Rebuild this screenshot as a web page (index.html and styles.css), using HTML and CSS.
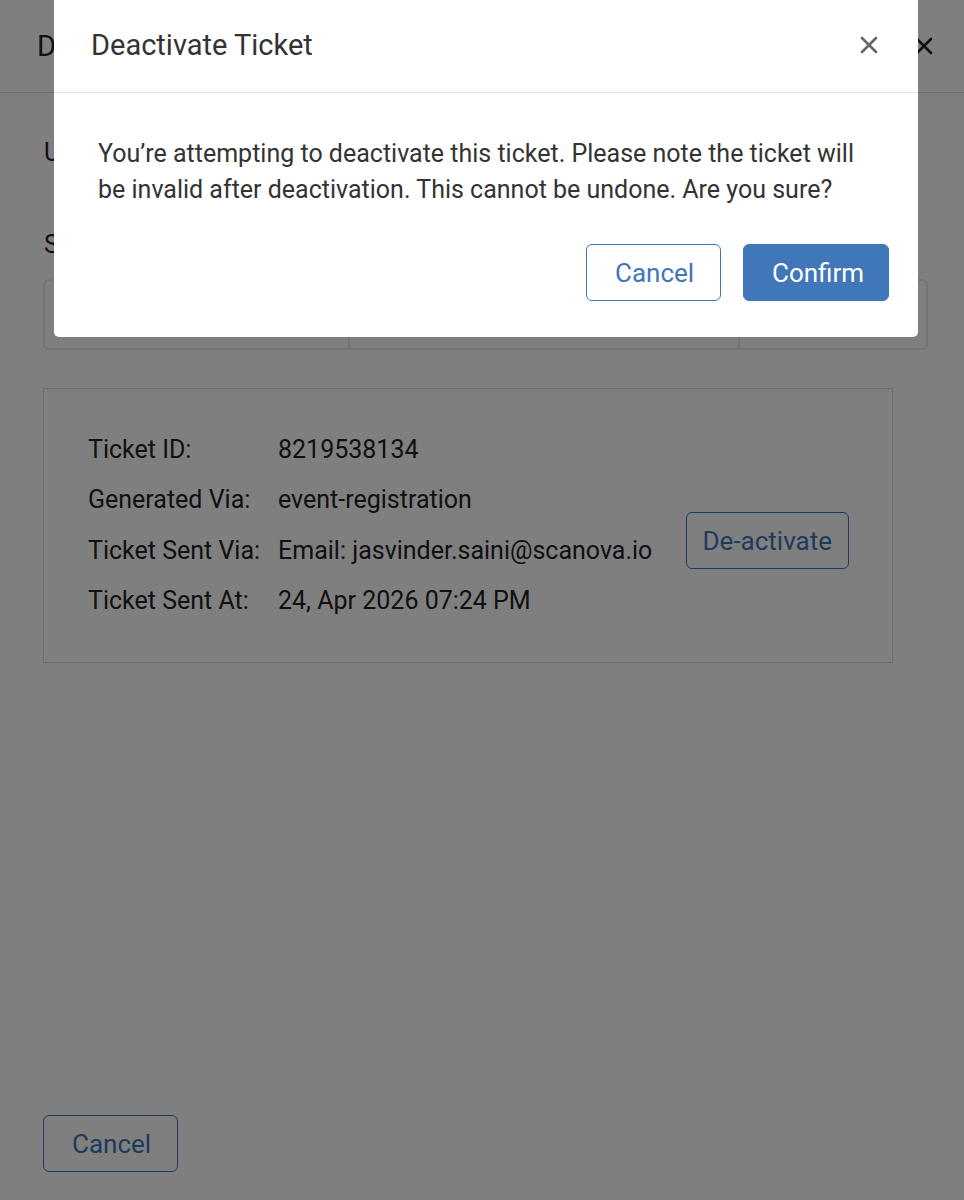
FILE: index.html
```html
<!DOCTYPE html>
<html lang="en">

<head>
    <meta charset="UTF-8">
    <meta name="viewport" content="width=device-width, initial-scale=1.0">
    <title>Deactivate Ticket</title>
    <link rel="stylesheet" href="styles.css">
</head>

<body>
    <div class="page">
        <div class="page-header">
            <h1>Deactivate Tickets</h1>
            <button class="btn-close page-close" aria-label="Close">
                <svg width="20" height="20" viewBox="0 0 20 20"><path d="M3 3 L17 17 M17 3 L3 17" stroke="currentColor" stroke-width="2.6" stroke-linecap="round"/></svg>
            </button>
        </div>

        <div class="page-body">
            <p class="intro">Use the search below to find the ticket you want to deactivate.</p>

            <div class="search-label">Search Ticket</div>
            <div class="search-bar">
                <div class="search-cell cell-type">Ticket ID</div>
                <div class="search-cell cell-value">8219538134</div>
                <div class="search-cell cell-action">Search</div>
            </div>

            <div class="ticket-card">
                <div class="ticket-rows">
                    <div class="ticket-row"><span class="label">Ticket ID:</span><span>8219538134</span></div>
                    <div class="ticket-row"><span class="label">Generated Via:</span><span>event-registration</span></div>
                    <div class="ticket-row"><span class="label">Ticket Sent Via:</span><span>Email: jasvinder.saini@scanova.io</span></div>
                    <div class="ticket-row"><span class="label">Ticket Sent At:</span><span>24, Apr 2026 07:24 PM</span></div>
                </div>
                <button class="btn btn-outline btn-deactivate">De-activate</button>
            </div>
        </div>

        <div class="page-footer">
            <button class="btn btn-outline">Cancel</button>
        </div>
    </div>

    <div class="overlay">
        <div class="dialog">
            <div class="dialog-header">
                <h2>Deactivate Ticket</h2>
                <button class="btn-close dialog-close" aria-label="Close">
                    <svg width="20" height="20" viewBox="0 0 20 20"><path d="M3 3 L17 17 M17 3 L3 17" stroke="currentColor" stroke-width="2.6" stroke-linecap="round"/></svg>
                </button>
            </div>
            <div class="dialog-body">
                <p>You’re attempting to deactivate this ticket. Please note the ticket will be invalid after deactivation. This cannot be undone. Are you sure?</p>
                <div class="dialog-actions">
                    <button class="btn btn-outline">Cancel</button>
                    <button class="btn btn-primary">Confirm</button>
                </div>
            </div>
        </div>
    </div>
</body>

</html>
```

FILE: styles.css
```css
* {
    box-sizing: border-box;
    margin: 0;
    padding: 0;
    font-family: Roboto, 'Noto Sans', sans-serif;
}

body {
    background-color: #fff;
    color: #222;
    font-size: 25px;
}

button {
    font-family: inherit;
    cursor: pointer;
}

/* underlying full-screen page */
.page {
    min-height: 1200px;
    display: flex;
    flex-direction: column;
}

.page-header {
    height: 93px;
    border-bottom: 1px solid #dcdcdc;
    display: flex;
    align-items: center;
    justify-content: space-between;
    padding: 0 30px 0 37px;
}

.page-header h1 {
    font-size: 29px;
    font-weight: 400;
}

.btn-close {
    background: none;
    border: none;
    display: flex;
    color: #222;
}

.page-body {
    padding: 42px 36px 0 43px;
    flex: 1;
}

.intro {
    line-height: 36px;
    margin-left: 1px;
}

.search-label {
    margin-top: 56px;
    line-height: 36px;
    margin-left: 1px;
}

.search-bar {
    margin-top: 16px;
    height: 71px;
    display: flex;
    border: 2px solid #e6e6e6;
    border-radius: 6px;
}

.search-cell {
    display: flex;
    align-items: center;
    padding: 0 20px;
    color: #555;
}

.cell-type {
    width: 305px;
    border-right: 2px solid #e6e6e6;
}

.cell-value {
    width: 390px;
    border-right: 2px solid #e6e6e6;
}

.cell-action {
    flex: 1;
}

.ticket-card {
    margin-top: 38px;
    width: 850px;
    height: 275px;
    border: 1px solid #dadada;
    display: flex;
    align-items: center;
    padding: 0 43px 0 44px;
    justify-content: space-between;
}

.ticket-rows {
    display: flex;
    flex-direction: column;
    gap: 14.5px;
}

.ticket-row {
    display: flex;
    line-height: 36px;
}

.ticket-row .label {
    width: 190px;
}

.btn {
    font-size: 26px;
    font-weight: 400;
    height: 57px;
    border-radius: 6px;
    padding: 0 28px;
}

.btn-outline {
    background: #fff;
    border: 1px solid #3f77b8;
    color: #3f77b8;
}

.btn-primary {
    background: #3f77b8;
    border: 1px solid #3f77b8;
    color: #fff;
}

.btn-deactivate {
    padding: 0 16px;
    margin-top: 30px;
}

.page-footer {
    padding: 0 0 28px 43px;
}

.page-footer .btn {
    width: 135px;
    height: 57px;
}

/* confirmation dialog on top of the page */
.overlay {
    position: fixed;
    inset: 0;
    background: rgba(0, 0, 0, 0.5);
    display: flex;
    align-items: flex-start;
    padding-left: 54px;
}

.dialog {
    width: 864px;
    background: #fff;
    border-radius: 0 0 5px 5px;
}

.dialog-header {
    height: 93px;
    border-bottom: 1px solid #e2e2e6;
    display: flex;
    align-items: center;
    justify-content: space-between;
    padding: 0 39px 3px 37px;
}

.dialog-header h2 {
    font-size: 29px;
    font-weight: 400;
    color: #333;
}

.dialog-close {
    color: #666;
}

.dialog-body {
    padding: 43px 29px 36px 44px;
    color: #333;
}

.dialog-body p {
    line-height: 36px;
    max-width: 768px;
}

.dialog-actions {
    margin-top: 36px;
    display: flex;
    justify-content: flex-end;
    gap: 22px;
}

.dialog-actions .btn-outline {
    width: 135px;
}

.dialog-actions .btn-primary {
    width: 146px;
}
```
